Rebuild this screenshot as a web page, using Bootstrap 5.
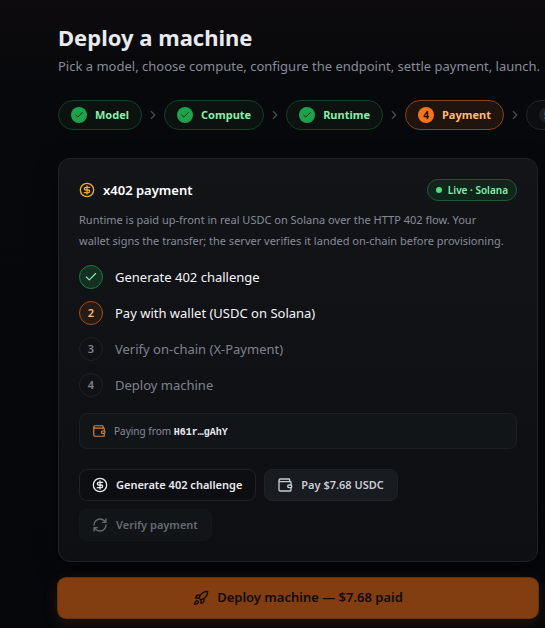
<!DOCTYPE html>
<html lang="en" data-bs-theme="dark">
<head>
<meta charset="utf-8">
<meta name="viewport" content="width=device-width, initial-scale=1">
<title>Deploy a machine</title>
<link href="https://cdn.jsdelivr.net/npm/bootstrap@5.3.0/dist/css/bootstrap.min.css" rel="stylesheet">
<style>
  body {
    font-family: "Segoe UI", "Noto Sans", "Open Sans", sans-serif;
    font-size: 13px;
    line-height: 20px;
    color: #e8eaee;
    background: linear-gradient(#0d0b0c, #07080c 90px, #06070a);
    min-height: 100vh;
    overflow-x: hidden;
  }
  .page { padding: 21px 7px 10px 58px; }
  .page-title { font-size: 22px; line-height: 32px; font-weight: 700; color: #e8eaee; margin-bottom: 3px; }
  .subtitle { color: #868c98; margin-bottom: 24px; }
  .ico { width: 16px; height: 16px; flex: none; fill: none; stroke: currentColor; stroke-width: 2; stroke-linecap: round; stroke-linejoin: round; }
  .ico-sm { width: 14px; height: 14px; }
  .ico-xs { width: 10px; height: 10px; }

  .stepper { gap: 4px; margin: 0 -7px 28px 0; overflow: hidden; color: #4a4d54; }
  .stage { height: 30px; padding: 0 12px; gap: 8px; border: 1px solid #23262b; border-radius: 15px; font-size: 11px; font-weight: 700; white-space: nowrap; color: #868c98; background: #0b0d11; flex: none; }
  .stage-dot { width: 16px; height: 16px; border-radius: 50%; background: #1b1e23; font-size: 10px; font-weight: 700; flex: none; }
  .stage.done { color: #86efac; border-color: #124126; background: #0b120f; }
  .stage.done .stage-dot { background: #1ea34c; color: #07150c; }
  .stage.current { color: #fdba74; border-color: #8a4315; background: #20140e; }
  .stage.current .stage-dot { background: #f97316; color: #160a03; }

  .panel { padding: 20px; border: 1px solid #1f2226; border-radius: 12px; background: linear-gradient(#121418, #0e0f12); box-shadow: 0 8px 24px #0006; margin-bottom: 16px; }
  .panel-title { font-size: 13px; line-height: 20px; font-weight: 600; gap: 8px; }
  .gold { color: #eab120; }
  .live { height: 22px; padding: 0 8px; gap: 6px; border: 1px solid #1a5a34; border-radius: 11px; background: #11251c; color: #86efac; font-size: 10px; font-weight: 600; }
  .live-dot { width: 6px; height: 6px; border-radius: 50%; background: #4ade80; }
  .note { font-size: 11px; line-height: 21px; color: #868c98; margin: 8px 0 14px; padding-right: 12px; }

  .tasks { gap: 12px; margin-bottom: 16px; color: #7d838e; }
  .task { gap: 12px; line-height: 24px; }
  .task-dot { width: 24px; height: 24px; border: 1px solid #1f2226; border-radius: 50%; font-size: 11px; font-weight: 600; flex: none; }
  .task.done, .task.current { color: #f4f5f7; }
  .task.done .task-dot { color: #86efac; background: #133022; border-color: #1b7a40; }
  .task.current .task-dot { color: #fdba74; background: #261a15; border-color: #a44e18; }

  .payer { height: 36px; padding: 0 12px; gap: 8px; border: 1px solid #1c2024; border-radius: 8px; background: #111518; color: #868c98; font-size: 10px; margin-bottom: 20px; }
  .payer .ico { color: #e08232; }
  .address { font: 700 10px/16px "Liberation Mono", monospace; color: #e8eaee; }

  .action { height: 32px; padding: 0 13px 0 12px; gap: 8px; border: 1px solid #1f2226; border-radius: 8px; font-size: 11px; font-weight: 600; line-height: 20px; color: #e8eaee; background: #0d0e11; }
  .action.pay { background: #181b1f; color: #c9ccd1; }
  .action.verify:disabled { background: #111517; border-color: #14181b; color: #666a70; opacity: 1; }
  .deploy, .deploy:hover { height: 40px; gap: 8px; border: 0; border-radius: 8px; font-size: 13px; font-weight: 600; color: #120a05; background: #823e11; box-shadow: 0 0 0 1px #65310f, 0 4px 16px #f9731626; }
</style>
<script src="https://cdn.jsdelivr.net/npm/bootstrap@5.3.0/dist/js/bootstrap.bundle.min.js"></script>
</head>
<body>
<svg class="d-none" aria-hidden="true">
  <symbol id="check" viewBox="0 0 24 24"><path d="M20 6 9 17l-5-5"/></symbol>
  <symbol id="chevron" viewBox="0 0 24 24"><path d="m9 18 6-6-6-6"/></symbol>
  <symbol id="dollar" viewBox="0 0 24 24"><circle cx="12" cy="12" r="10"/><path d="M16 8h-6a2 2 0 1 0 0 4h4a2 2 0 1 1 0 4H8M12 18V6"/></symbol>
  <symbol id="wallet" viewBox="0 0 24 24"><path d="M19 7V4a1 1 0 0 0-1-1H5a2 2 0 0 0 0 4h15a1 1 0 0 1 1 1v4h-3a2 2 0 0 0 0 4h3a1 1 0 0 0 1-1v-2a1 1 0 0 0-1-1M3 5v14a2 2 0 0 0 2 2h15a1 1 0 0 0 1-1v-4"/></symbol>
  <symbol id="refresh" viewBox="0 0 24 24"><path d="M3 12a9 9 0 0 1 9-9 9.75 9.75 0 0 1 6.74 2.74L21 8M21 3v5h-5M21 12a9 9 0 0 1-9 9 9.75 9.75 0 0 1-6.74-2.74L3 16M8 16H3v5"/></symbol>
  <symbol id="rocket" viewBox="0 0 24 24"><path d="M4.5 16.5c-1.5 1.26-2 5-2 5s3.74-.5 5-2c.71-.84.7-2.13-.09-2.91a2.18 2.18 0 0 0-2.91-.09zM12 15l-3-3a22 22 0 0 1 2-3.95A12.88 12.88 0 0 1 22 2c0 2.72-.78 7.5-6 11a22.35 22.35 0 0 1-4 2zM9 12H4s.55-3.03 2-4c1.62-1.08 5 0 5 0M12 15v5s3.03-.55 4-2c1.08-1.62 0-5 0-5"/></symbol>
</svg>
<main class="page">
  <h1 class="page-title">Deploy a machine</h1>
  <p class="subtitle text-nowrap">Pick a model, choose compute, configure the endpoint, settle payment, launch.</p>

  <nav class="stepper d-flex align-items-center" aria-label="Deployment steps">
    <div class="stage done d-flex align-items-center"><span class="stage-dot d-flex align-items-center justify-content-center"><svg class="ico ico-xs"><use href="#check"/></svg></span>Model</div>
    <svg class="ico ico-sm"><use href="#chevron"/></svg>
    <div class="stage done d-flex align-items-center"><span class="stage-dot d-flex align-items-center justify-content-center"><svg class="ico ico-xs"><use href="#check"/></svg></span>Compute</div>
    <svg class="ico ico-sm"><use href="#chevron"/></svg>
    <div class="stage done d-flex align-items-center"><span class="stage-dot d-flex align-items-center justify-content-center"><svg class="ico ico-xs"><use href="#check"/></svg></span>Runtime</div>
    <svg class="ico ico-sm"><use href="#chevron"/></svg>
    <div class="stage current d-flex align-items-center" aria-current="step"><span class="stage-dot d-flex align-items-center justify-content-center">4</span>Payment</div>
    <svg class="ico ico-sm"><use href="#chevron"/></svg>
    <div class="stage d-flex align-items-center"><span class="stage-dot d-flex align-items-center justify-content-center">5</span></div>
  </nav>

  <section class="panel">
    <div class="d-flex align-items-center justify-content-between">
      <h2 class="panel-title d-flex align-items-center mb-0"><svg class="ico gold"><use href="#dollar"/></svg>x402 payment</h2>
      <span class="live d-flex align-items-center"><span class="live-dot"></span>Live · Solana</span>
    </div>
    <p class="note">Runtime is paid up-front in real USDC on Solana over the HTTP 402 flow. Your wallet signs the transfer; the server verifies it landed on-chain before provisioning.</p>
    <ol class="tasks list-unstyled d-flex flex-column">
      <li class="task done d-flex"><span class="task-dot d-flex align-items-center justify-content-center"><svg class="ico ico-sm"><use href="#check"/></svg></span>Generate 402 challenge</li>
      <li class="task current d-flex"><span class="task-dot d-flex align-items-center justify-content-center">2</span>Pay with wallet (USDC on Solana)</li>
      <li class="task d-flex"><span class="task-dot d-flex align-items-center justify-content-center">3</span>Verify on-chain (X-Payment)</li>
      <li class="task d-flex"><span class="task-dot d-flex align-items-center justify-content-center">4</span>Deploy machine</li>
    </ol>
    <div class="payer d-flex align-items-center"><svg class="ico ico-sm"><use href="#wallet"/></svg><span>Paying from <span class="address">H61r…gAhY</span></span></div>
    <div class="d-flex flex-wrap gap-2">
      <button type="button" class="action btn d-flex align-items-center"><svg class="ico"><use href="#dollar"/></svg>Generate 402 challenge</button>
      <button type="button" class="action pay btn d-flex align-items-center"><svg class="ico"><use href="#wallet"/></svg>Pay $7.68 USDC</button>
      <button type="button" class="action verify btn d-flex align-items-center" disabled><svg class="ico"><use href="#refresh"/></svg>Verify payment</button>
    </div>
  </section>
  <button type="button" class="deploy btn w-100 d-flex align-items-center justify-content-center"><svg class="ico"><use href="#rocket"/></svg>Deploy machine — $7.68 paid</button>
</main>
</body>
</html>
